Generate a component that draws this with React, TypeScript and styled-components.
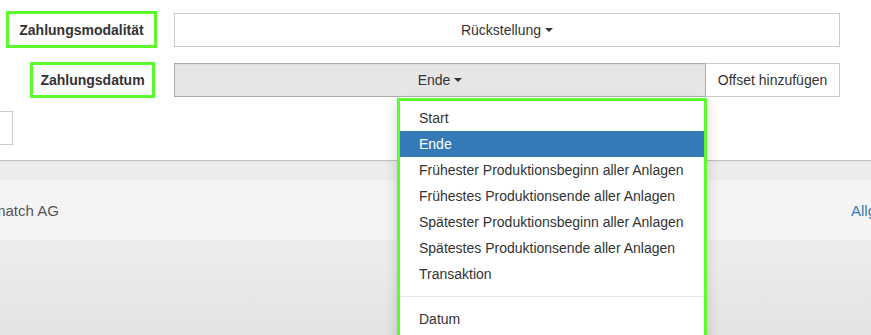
import React from "react";
import styled, { createGlobalStyle } from "styled-components";

const Global = createGlobalStyle`
  html, body { margin: 0; padding: 0; background: #fff; overflow: hidden; }
  body {
    font-family: "Liberation Sans", Arial, Helvetica, sans-serif;
    font-size: 14px;
    color: #333;
  }
  * { box-sizing: border-box; }
`;

const Page = styled.div`
  width: 871px;
  height: 335px;
  overflow: hidden;
  display: flex;
  flex-direction: column;
  background: #fff;
`;

const FormArea = styled.div`
  display: flex;
  flex-direction: column;
  padding: 11px 31px 15px 0;
  border-bottom: 1px solid #c4c4c4;
  box-shadow: 0 1px 2px rgba(0, 0, 0, 0.06);
  position: relative;
  z-index: 2;
  background: #fff;
`;

const Field = styled.div<{ $h: number; $mt?: number }>`
  display: grid;
  grid-template-columns: 174px 1fr;
  align-items: center;
  height: ${(p) => p.$h}px;
  margin-top: ${(p) => p.$mt ?? 0}px;
`;

const LabelBox = styled.label<{ $w: number; $mr: number }>`
  justify-self: end;
  width: ${(p) => p.$w}px;
  margin-right: ${(p) => p.$mr}px;
  height: 100%;
  border: 3px solid #5cfb2c;
  display: flex;
  align-items: center;
  justify-content: center;
  font-weight: bold;
  font-size: 14px;
  color: #333;
  white-space: nowrap;
`;

const SelectButton = styled.div`
  height: 34px;
  border: 1px solid #ccc;
  background: #fff;
  display: flex;
  align-items: center;
  justify-content: center;
  color: #333;
  font-size: 14px;
`;

const Caret = styled.span`
  display: inline-block;
  width: 0;
  height: 0;
  margin-left: 4px;
  border-top: 4px solid #333;
  border-left: 4px solid transparent;
  border-right: 4px solid transparent;
  vertical-align: middle;
`;

const Group = styled.div`
  display: flex;
  height: 34px;
`;

const DropWrap = styled.div`
  position: relative;
  flex: 1;
  display: flex;
`;

const ActiveButton = styled.div`
  flex: 1;
  height: 34px;
  border: 1px solid #adadad;
  background: #e6e6e6;
  box-shadow: inset 0 1px 2px rgba(0, 0, 0, 0.05);
  display: flex;
  align-items: center;
  justify-content: center;
  color: #333;
`;

const AddonButton = styled.div`
  width: 135px;
  height: 34px;
  margin-left: -1px;
  border: 1px solid #ccc;
  background: #fff;
  display: flex;
  align-items: center;
  justify-content: center;
  color: #333;
  white-space: nowrap;
`;

const Menu = styled.ul`
  position: absolute;
  top: calc(100% + 1px);
  right: -1px;
  width: 310px;
  margin: 0;
  padding: 4px 0 0;
  list-style: none;
  background: #fff;
  border: 3px solid #5cfb2c;
  box-shadow: 0 6px 12px rgba(0, 0, 0, 0.175);
  z-index: 10;
`;

const MenuItem = styled.li<{ $active?: boolean }>`
  height: 26px;
  line-height: 26px;
  padding: 0 19px;
  white-space: nowrap;
  background: ${(p) => (p.$active ? "#337ab7" : "transparent")};
  color: ${(p) => (p.$active ? "#fff" : "#333")};
  font-size: 14px;
`;

const Divider = styled.li`
  height: 1px;
  margin: 9px 0;
  background: #e5e5e5;
`;

const SideInput = styled.div`
  width: 60px;
  height: 34px;
  margin-left: -47px;
  border: 1px solid #ccc;
  background: #fff;
`;

const Lower = styled.div`
  flex: 1;
  background: linear-gradient(#ededed, #ebebeb 60%, #e3e3e3);
  padding-top: 19px;
`;

const InfoRow = styled.div`
  height: 60px;
  background: #f4f4f4;
  display: flex;
  align-items: center;
  justify-content: space-between;
  overflow: hidden;
`;

const Company = styled.span`
  margin-left: -7px;
  color: #555;
  font-size: 15px;
  white-space: nowrap;
`;

const LinkCell = styled.span`
  width: 20px;
  overflow: hidden;
  white-space: nowrap;
  color: #337ab7;
  font-size: 15px;
`;

const items = [
  "Start",
  "Ende",
  "Frühester Produktionsbeginn aller Anlagen",
  "Frühestes Produktionsende aller Anlagen",
  "Spätester Produktionsbeginn aller Anlagen",
  "Spätestes Produktionsende aller Anlagen",
  "Transaktion",
];

export default function App() {
  return (
    <Page>
      <Global />
      <FormArea>
        <Field $h={37}>
          <LabelBox $w={151} $mr={17}>Zahlungsmodalität</LabelBox>
          <SelectButton>
            Rückstellung
            <Caret />
          </SelectButton>
        </Field>
        <Field $h={36} $mt={14}>
          <LabelBox $w={125} $mr={19}>Zahlungsdatum</LabelBox>
          <Group>
            <DropWrap>
              <ActiveButton>
                Ende
                <Caret />
              </ActiveButton>
              <Menu>
                {items.map((it) => (
                  <MenuItem key={it} $active={it === "Ende"}>
                    {it}
                  </MenuItem>
                ))}
                <Divider />
                <MenuItem>Datum</MenuItem>
                <MenuItem>&nbsp;</MenuItem>
              </Menu>
            </DropWrap>
            <AddonButton>Offset hinzufügen</AddonButton>
          </Group>
        </Field>
        <Field $h={34} $mt={13}>
          <SideInput />
        </Field>
      </FormArea>
      <Lower>
        <InfoRow>
          <Company>match AG</Company>
          <LinkCell>Allgemein</LinkCell>
        </InfoRow>
      </Lower>
    </Page>
  );
}
